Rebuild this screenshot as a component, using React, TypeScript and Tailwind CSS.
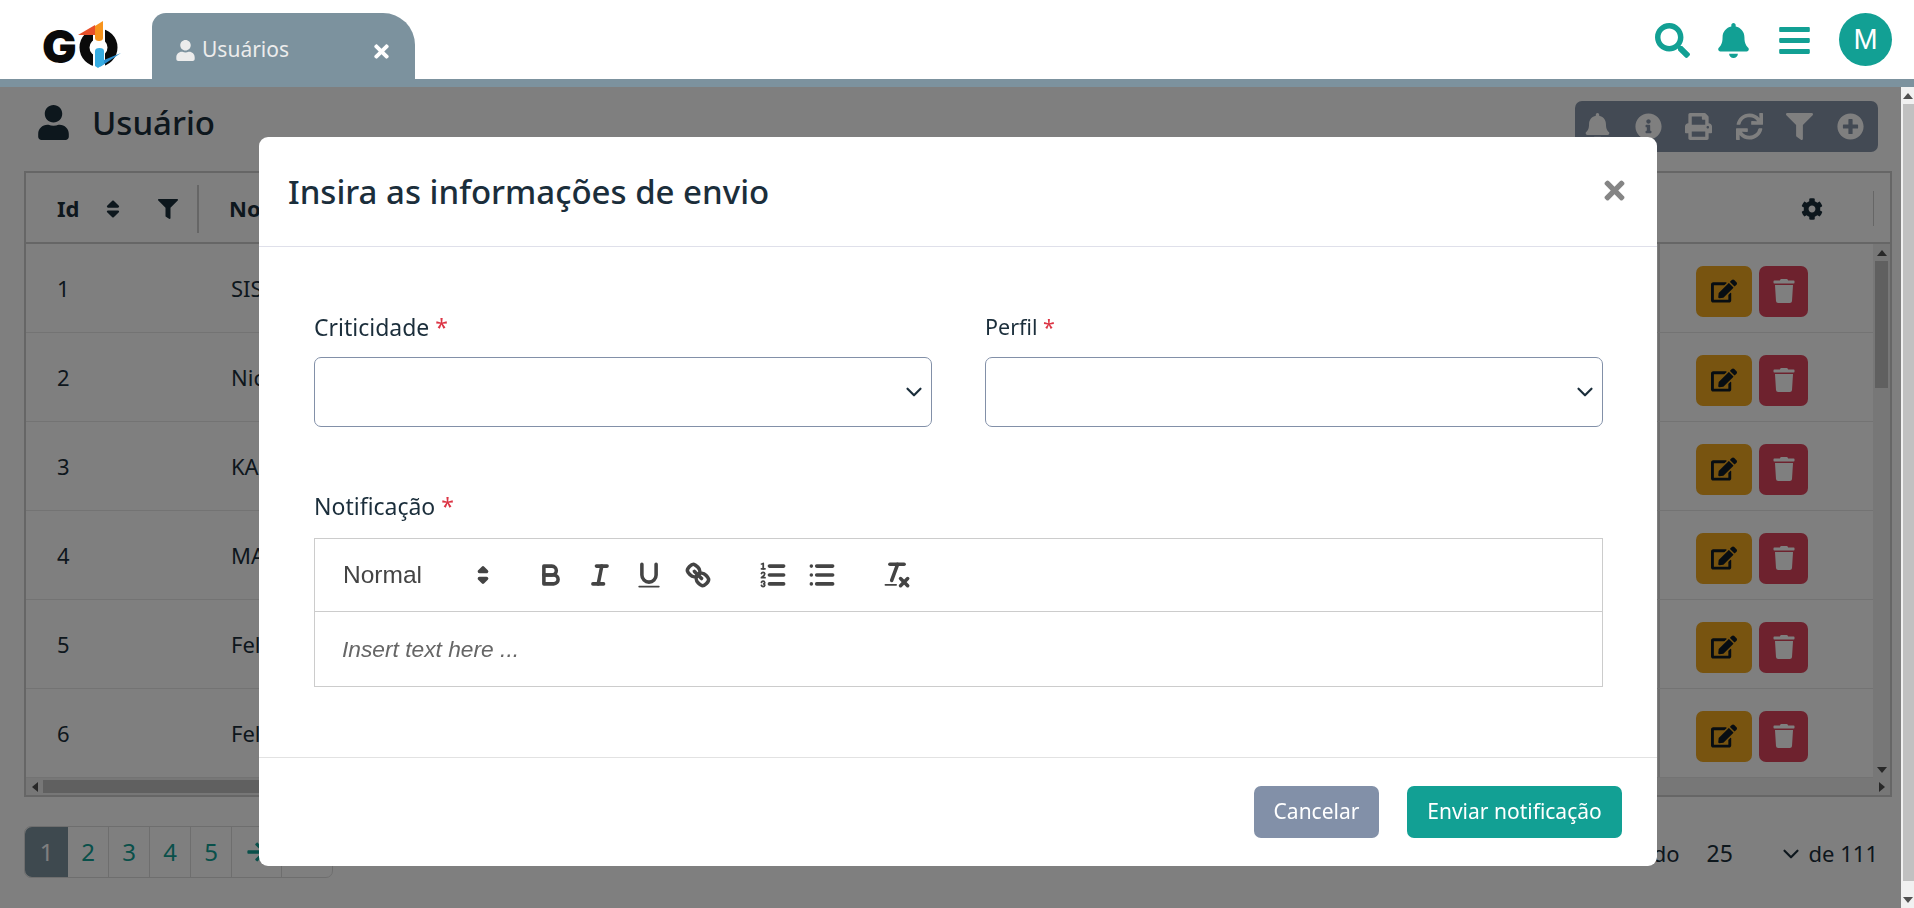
import { ChevronDown } from "lucide-react";
import { FaArrowRight, FaBars, FaBell, FaCog, FaEdit, FaFilter, FaInfoCircle, FaPlusCircle, FaPrint, FaSearch, FaSort, FaSync, FaTimes, FaTrash, FaUser } from "react-icons/fa";

const rows = [
  { id: 1, name: "SISTEMA" },
  { id: 2, name: "Nicolas" },
  { id: 3, name: "KAREN" },
  { id: 4, name: "MARIA" },
  { id: 5, name: "Felipe" },
  { id: 6, name: "Felipe" },
];

function Logo() {
  return (
    <svg width="90" height="62" viewBox="0 0 90 62" className="ml-[38px] mt-[16px] shrink-0">
      <text x="4" y="47" fontFamily="Inter, sans-serif" fontWeight="900" fontSize="46" fill="#0a0a0a">G</text>
      <circle cx="60.5" cy="31.5" r="14" fill="none" stroke="#0a0a0a" strokeWidth="10" />
      <rect x="55" y="10" width="12" height="18" fill="#fff" />
      <rect x="55" y="31" width="12" height="20" fill="#fff" />
      <polygon points="40,19 57,9 57,19" fill="#e8502a" />
      <path d="M57 10 L65 5 V22 Q65 25 61 25 Q57 25 57 22 Z" fill="#f7941d" />
      <polygon points="66,44 83,37 62,51" fill="#2a8fd0" />
      <path d="M57 35 Q57 32 61.5 32 Q66 32 66 35 V48 L60 52 L57 50 Z" fill="#36ace2" />
    </svg>
  );
}

function Triangle(props: { dir: "up" | "down" | "left" | "right" }) {
  const points = { up: "0,8 5,2 10,8", down: "0,2 5,8 10,2", left: "8,0 2,5 8,10", right: "2,0 8,5 2,10" }[props.dir];
  return (
    <svg width="10" height="10" viewBox="0 0 10 10" className="fill-[#505050]">
      <polygon points={points} />
    </svg>
  );
}

function QuillButton(props: { children: React.ReactNode }) {
  return (
    <span className="w-[49px] h-[42px] flex items-center justify-center shrink-0">
      <svg viewBox="0 0 18 18" className="w-[32px] h-[32px] fill-none stroke-[#444] stroke-2" strokeLinecap="round" strokeLinejoin="round">
        {props.children}
      </svg>
    </span>
  );
}

function SelectField(props: { label: string, labelClass: string }) {
  return (
    <div>
      <label className={ `block leading-[30px] text-[#1b2e3b] ${props.labelClass}` }>
        {props.label} <span className="text-[#dc3545]">*</span>
      </label>
      <div className="mt-[15px] h-[70px] border border-[#8290a8] rounded-[7px] flex items-center justify-end pr-[4px]">
        <ChevronDown size={26} strokeWidth={2} className="text-[#1b2e3b]" />
      </div>
    </div>
  );
}

export default function App() {
  return (
    <div className="h-screen w-full overflow-hidden flex flex-col bg-white font-['Noto_Sans',sans-serif] text-[#1b2e3b]">
      <header className="h-[79px] shrink-0 bg-white flex relative z-20">
        <Logo />
        <div className="ml-[24px] mt-[13px] w-[263px] h-[66px] bg-[#7c929e] rounded-tl-[14px] rounded-tr-[32px] flex items-center pt-[8px] text-[#ececec]">
          <FaUser className="ml-[23px] text-[21px]" />
          <span className="ml-[6px] text-[21px]">Usuários</span>
          <FaTimes className="ml-auto mr-[23px] mt-[2px] text-[21px] text-white" />
        </div>
        <div className="ml-auto flex items-center pt-[2px] text-[#12a094] mr-[22px]">
          <FaSearch className="text-[35px]" />
          <FaBell className="ml-[26px] text-[35px]" />
          <FaBars className="ml-[26px] text-[35px]" />
          <div className="ml-[27px] mb-[2px] w-[53px] h-[53px] rounded-full bg-[#12a094] text-white flex items-center justify-center text-[29px] font-['Liberation_Sans',sans-serif]">
            M
          </div>
        </div>
      </header>
      <div className="h-[8px] shrink-0 bg-[#7c929e] relative z-20" />

      <div className="flex-1 min-h-0 flex">
        <main className="relative flex-1 min-w-0 flex flex-col pl-[24px] pr-[9px]">
          <div className="h-[84px] shrink-0 flex items-start">
            <FaUser className="ml-[12px] mt-[18px] text-[35px] text-[#1b2e3b]" />
            <h1 className="ml-[21px] mt-[11px] text-[33px] leading-[50px] font-medium">Usuário</h1>
            <div className="ml-auto mr-[14px] mt-[14px] w-[303px] h-[51px] rounded-[7px] bg-[#8694a8] flex items-center justify-center pr-[5px] text-white text-[27px]">
              {[FaBell, FaInfoCircle, FaPrint, FaSync, FaFilter, FaPlusCircle].map((Icon, index) => (
                <span key={index} className="w-[50.6px] flex justify-center shrink-0"><Icon /></span>
              ))}
            </div>
          </div>

          <div className="h-[626px] shrink-0 border-2 border-[#ccc] flex flex-col">
            <div className="h-[71px] shrink-0 border-b-2 border-[#ccc] flex items-center pt-[2px] text-[22px] font-bold">
              <div className="w-[174px] shrink-0 flex items-center pl-[31px] relative">
                <span>Id</span>
                <FaSort className="ml-[23px] text-[22px]" />
                <FaFilter className="ml-[34px] text-[20px]" />
                <span className="absolute left-[171px] top-[-7px] w-[2px] h-[48px] bg-[#ccc]" />
              </div>
              <div className="pl-[29px]">Nome</div>
              <div className="ml-auto w-[233px] shrink-0 flex items-center">
                <FaCog className="ml-[144px] text-[22px]" />
                <span className="ml-[50px] w-px h-[35px] bg-[#ccc]" />
              </div>
            </div>
            <div className="flex-1 min-h-0 flex">
              <div className="flex-1 min-w-0 overflow-hidden">
                {rows.map((row) => (
                  <div key={row.id} className="h-[89px] border-b border-[#e6e6e6] flex items-center text-[22px]">
                    <div className="w-[174px] shrink-0 pl-[31px]">{row.id}</div>
                    <div className="pl-[31px]">{row.name}</div>
                    <div className="ml-auto w-[215px] h-full shrink-0 border-l-2 border-[#ddd] flex items-center gap-[7px] pl-[36px] pt-[6px]">
                      <button type="button" className="w-[56px] h-[51px] rounded-[7px] bg-[#f0a820] flex items-center justify-center text-[#0f1a24] text-[26px]">
                        <FaEdit />
                      </button>
                      <button type="button" className="w-[49px] h-[51px] rounded-[7px] bg-[#dc445c] flex items-center justify-center text-white text-[24px]">
                        <FaTrash />
                      </button>
                    </div>
                  </div>
                ))}
              </div>
              <div className="w-[17px] shrink-0 bg-[#eee] flex flex-col items-center">
                <div className="h-[17px] flex items-center"><Triangle dir="up" /></div>
                <div className="w-[13px] h-[127px] bg-[#c1c1c1]" />
                <div className="mt-auto h-[17px] flex items-center"><Triangle dir="down" /></div>
              </div>
            </div>
            <div className="h-[17px] shrink-0 bg-[#eee] flex items-center">
              <span className="w-[17px] flex justify-center"><Triangle dir="left" /></span>
              <div className="w-[400px] h-[13px] bg-[#c1c1c1]" />
              <span className="ml-auto w-[17px] flex justify-center"><Triangle dir="right" /></span>
            </div>
          </div>

          <div className="mt-[29px] flex items-start justify-between">
            <div className="flex h-[52px] text-[24px] text-[#12a094] border border-[#ddd] rounded-[7px]">
              <span className="w-[43px] flex items-center justify-center bg-[#7c929e] text-white rounded-l-[7px]">1</span>
              {[2, 3, 4, 5].map((page) => (
                <span key={page} className="w-[41px] flex items-center justify-center border-r border-[#ddd]">{page}</span>
              ))}
              <span className="w-[50px] flex items-center justify-center border-r border-[#ddd]"><FaArrowRight className="text-[22px]" /></span>
              <span className="w-[50px]" />
            </div>
            <div className="flex items-center mr-[14px] h-[52px] pt-[3px] text-[22px]">
              <span>Mostrando</span>
              <span className="ml-[27px] w-[71px] text-[23px]">25</span>
              <ChevronDown size={26} strokeWidth={2} />
              <span className="ml-[5px]">de 111</span>
            </div>
          </div>

          <div className="absolute inset-0 bg-black/50 z-10" />
        </main>
        <div className="w-[13px] shrink-0 bg-[#f1f1f1] flex flex-col items-center">
          <div className="h-[17px] flex items-center"><Triangle dir="up" /></div>
          <div className="w-[11px] ml-[2px] h-[777px] bg-[#c1c1c1]" />
          <div className="mt-auto h-[17px] flex items-center"><Triangle dir="down" /></div>
        </div>
      </div>

      <div className="fixed inset-0 z-30 flex justify-center items-start pt-[137px] pl-[2px] pointer-events-none">
        <div className="w-[1398px] h-[729px] bg-white rounded-[9px] flex flex-col">
          <div className="h-[110px] shrink-0 border-b border-[#dfe0ea] flex items-center pl-[29px] pr-[28px]">
            <h2 className="text-[33px] font-medium">Insira as informações de envio</h2>
            <FaTimes className="ml-auto mb-[3px] text-[29px] text-[#858585]" />
          </div>

          <div className="flex-1 min-h-0 pl-[55px] pr-[54px] pt-[65px]">
            <div className="grid grid-cols-2 gap-x-[53px]">
              <SelectField label="Criticidade" labelClass="text-[23px]" />
              <SelectField label="Perfil" labelClass="text-[21.5px]" />
            </div>
            <label className="block mt-[64px] text-[23px] leading-[30px]">
              Notificação <span className="text-[#dc3545]">*</span>
            </label>
            <div className="mt-[17px] border border-[#ccc] font-['Liberation_Sans',sans-serif]">
              <div className="h-[73px] border-b border-[#ccc] flex items-center pl-[14px]">
                <div className="w-[171px] h-[42px] shrink-0 mr-[26px] flex items-center pl-[14px] pr-[1px] text-[#444] text-[24.5px]">
                  <span>Normal</span>
                  <svg viewBox="0 0 18 18" className="ml-auto w-[32px] h-[32px] fill-[#444] stroke-[#444] stroke-2" strokeLinejoin="round">
                    <polygon points="7 11 9 13 11 11 7 11" />
                    <polygon points="7 7 9 5 11 7 7 7" />
                  </svg>
                </div>
                <QuillButton>
                  <path d="M5,4H9.5A2.5,2.5,0,0,1,12,6.5v0A2.5,2.5,0,0,1,9.5,9H5A0,0,0,0,1,5,9V4A0,0,0,0,1,5,4Z" />
                  <path d="M5,9h5.5A2.5,2.5,0,0,1,13,11.5v0A2.5,2.5,0,0,1,10.5,14H5a0,0,0,0,1,0,0V9A0,0,0,0,1,5,9Z" />
                </QuillButton>
                <QuillButton>
                  <line x1="7" x2="13" y1="4" y2="4" />
                  <line x1="5" x2="11" y1="14" y2="14" />
                  <line x1="8" x2="10" y1="14" y2="4" />
                </QuillButton>
                <QuillButton>
                  <path d="M5,3V9a4.012,4.012,0,0,0,4,4H9a4.012,4.012,0,0,0,4-4V3" />
                  <rect x="3" y="15" width="12" height="1" rx="0.5" ry="0.5" className="fill-[#444] stroke-0" />
                </QuillButton>
                <QuillButton>
                  <line x1="7" x2="11" y1="7" y2="11" />
                  <path d="M8.9,4.577a3.476,3.476,0,0,1,.36,4.679A3.476,3.476,0,0,1,4.577,8.9C3.185,7.5,2.035,6.4,4.217,4.217S7.5,3.185,8.9,4.577Z" />
                  <path d="M13.423,9.1a3.476,3.476,0,0,0-4.679-.36,3.476,3.476,0,0,0,.36,4.679c1.392,1.392,2.5,2.542,4.679.36S14.815,10.5,13.423,9.1Z" />
                </QuillButton>
                <span className="w-[26px] shrink-0" />
                <QuillButton>
                  <line x1="7" x2="15" y1="4" y2="4" />
                  <line x1="7" x2="15" y1="9" y2="9" />
                  <line x1="7" x2="15" y1="14" y2="14" />
                  <line x1="2.5" x2="4.5" y1="5.5" y2="5.5" className="stroke-1" />
                  <path d="M3.5,6A0.5,0.5,0,0,1,3,5.5V3.085l-0.276.138A0.5,0.5,0,0,1,2.053,3c-0.124-.247-0.023-0.324.224-0.447l1-.5A0.5,0.5,0,0,1,4,2.5v3A0.5,0.5,0,0,1,3.5,6Z" className="fill-[#444] stroke-0" />
                  <path d="M4.5,10.5h-2c0-.234,1.85-1.076,1.85-2.234A0.959,0.959,0,0,0,2.5,8.156" className="stroke-1" />
                  <path d="M2.5,14.846a0.959,0.959,0,0,0,1.85-.109A0.7,0.7,0,0,0,3.75,14a0.688,0.688,0,0,0,.6-0.736,0.959,0.959,0,0,0-1.85-.109" className="stroke-1" />
                </QuillButton>
                <QuillButton>
                  <line x1="6" x2="15" y1="4" y2="4" />
                  <line x1="6" x2="15" y1="9" y2="9" />
                  <line x1="6" x2="15" y1="14" y2="14" />
                  <line x1="3" x2="3" y1="4" y2="4" />
                  <line x1="3" x2="3" y1="9" y2="9" />
                  <line x1="3" x2="3" y1="14" y2="14" />
                </QuillButton>
                <span className="w-[26px] shrink-0" />
                <QuillButton>
                  <line x1="5" x2="13" y1="3" y2="3" />
                  <line x1="6" x2="9.35" y1="12" y2="3" />
                  <line x1="11" x2="15" y1="11" y2="15" />
                  <line x1="15" x2="11" y1="11" y2="15" />
                  <rect x="2" y="14" width="7" height="1" rx="0.5" ry="0.5" className="fill-[#444] stroke-0" />
                </QuillButton>
              </div>
              <div className="h-[74px] flex items-center pl-[27px] text-[22.75px] italic text-[#666]">Insert text here ...</div>
            </div>
          </div>

          <div className="h-[109px] shrink-0 border-t border-[#e2e2e2] flex items-center justify-end gap-[28px] pr-[35px] text-[21px] text-white">
            <button type="button" className="w-[125px] h-[52px] rounded-[7px] bg-[#8290a8]">Cancelar</button>
            <button type="button" className="w-[215px] h-[52px] rounded-[7px] bg-[#12a094]">Enviar notificação</button>
          </div>
        </div>
      </div>
    </div>
  );
}
